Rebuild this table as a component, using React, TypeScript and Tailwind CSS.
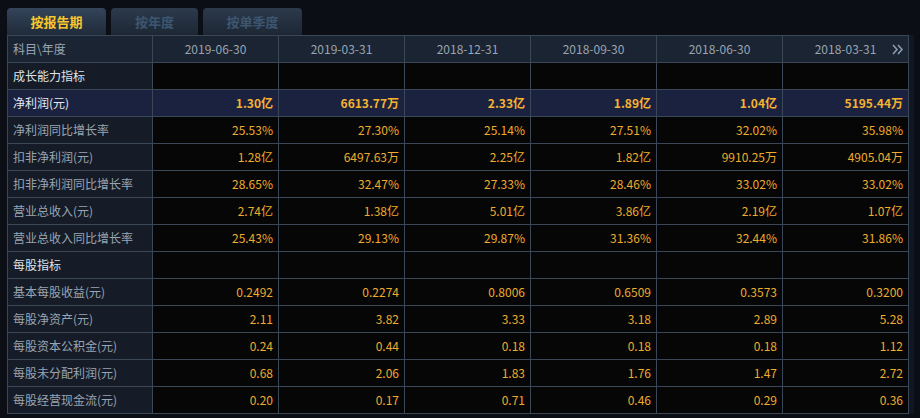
import React from "react";

const dates = ["2019-06-30", "2019-03-31", "2018-12-31", "2018-09-30", "2018-06-30", "2018-03-31"];

type Row = { label: string; values?: string[]; section?: boolean; hl?: boolean };

const rows: Row[] = [
  { label: "成长能力指标", section: true },
  { label: "净利润(元)", hl: true, values: ["1.30亿", "6613.77万", "2.33亿", "1.89亿", "1.04亿", "5195.44万"] },
  { label: "净利润同比增长率", values: ["25.53%", "27.30%", "25.14%", "27.51%", "32.02%", "35.98%"] },
  { label: "扣非净利润(元)", values: ["1.28亿", "6497.63万", "2.25亿", "1.82亿", "9910.25万", "4905.04万"] },
  { label: "扣非净利润同比增长率", values: ["28.65%", "32.47%", "27.33%", "28.46%", "33.02%", "33.02%"] },
  { label: "营业总收入(元)", values: ["2.74亿", "1.38亿", "5.01亿", "3.86亿", "2.19亿", "1.07亿"] },
  { label: "营业总收入同比增长率", values: ["25.43%", "29.13%", "29.87%", "31.36%", "32.44%", "31.86%"] },
  { label: "每股指标", section: true },
  { label: "基本每股收益(元)", values: ["0.2492", "0.2274", "0.8006", "0.6509", "0.3573", "0.3200"] },
  { label: "每股净资产(元)", values: ["2.11", "3.82", "3.33", "3.18", "2.89", "5.28"] },
  { label: "每股资本公积金(元)", values: ["0.24", "0.44", "0.18", "0.18", "0.18", "1.12"] },
  { label: "每股未分配利润(元)", values: ["0.68", "2.06", "1.83", "1.76", "1.47", "2.72"] },
  { label: "每股经营现金流(元)", values: ["0.20", "0.17", "0.71", "0.46", "0.29", "0.36"] },
];

export default function App() {
  return (
    <div
      className="w-[920px] h-[418px] overflow-hidden bg-[#0b0e15] text-[12px]"
      style={{ fontFamily: '"Noto Sans CJK SC", "Noto Sans", sans-serif' }}
    >
      <div className="flex gap-[5px] pl-[7px] pt-[8px]">
        <div className="w-[99px] h-[27px] rounded-t-[4px] bg-gradient-to-b from-[#34445a] to-[#202b3a] flex items-center justify-center text-[13px] font-bold text-[#f8c62c]">
          按报告期
        </div>
        <div className="w-[87px] h-[27px] rounded-t-[4px] bg-gradient-to-b from-[#2c3a4c] to-[#1d2734] flex items-center justify-center text-[13px] font-bold text-[#3d5670]">
          按年度
        </div>
        <div className="w-[99px] h-[27px] rounded-t-[4px] bg-gradient-to-b from-[#2c3a4c] to-[#1d2734] flex items-center justify-center text-[13px] font-bold text-[#3d5670]">
          按单季度
        </div>
      </div>
      <div className="flex">
        <table className="ml-[7px] w-[901px] table-fixed border-collapse">
          <colgroup>
            <col className="w-[145px]" />
            <col className="w-[126px]" />
            <col className="w-[126px]" />
            <col className="w-[126px]" />
            <col className="w-[126px]" />
            <col className="w-[126px]" />
            <col className="w-[126px]" />
          </colgroup>
          <thead>
            <tr className="h-[27px] bg-[#1b2432]">
              <th className="border border-[#3a4757] px-[5px] text-left font-normal text-[#9aa4b1]">科目\年度</th>
              {dates.map((d, i) => (
                <th key={d} className="relative border border-[#3a4757] text-center font-normal text-[#9aa4b1]">
                  {d}
                  {i === dates.length - 1 && (
                    <svg className="absolute right-[4px] top-[8px]" width="12" height="11" viewBox="0 0 12 11" fill="none" stroke="#8a9bb0" strokeWidth="1.6">
                      <polyline points="1,1 5,5.5 1,10" />
                      <polyline points="6,1 10,5.5 6,10" />
                    </svg>
                  )}
                </th>
              ))}
            </tr>
          </thead>
          <tbody>
            {rows.map((r) => (
              <tr key={r.label} className="h-[27px]">
                <td
                  className={`border border-[#3a4757] px-[5px] whitespace-nowrap ${
                    r.hl ? "bg-[#1a2240] text-[#e6eaf0]" : "bg-[#151c28]"
                  } ${r.section ? "text-[#dfe3e9]" : r.hl ? "" : "text-[#9aa4b1]"}`}
                >
                  {r.label}
                </td>
                {dates.map((d, i) => (
                  <td
                    key={d}
                    className={`border border-[#3a4757] px-[5px] text-right ${
                      r.hl ? "bg-[#1a2240] font-bold text-[#f6b330]" : "bg-[#060606] text-[#efac2c]"
                    }`}
                  >
                    {r.values ? r.values[i] : ""}
                  </td>
                ))}
              </tr>
            ))}
          </tbody>
        </table>
        <div className="w-[5px] bg-[#111722]" />
      </div>
    </div>
  );
}
